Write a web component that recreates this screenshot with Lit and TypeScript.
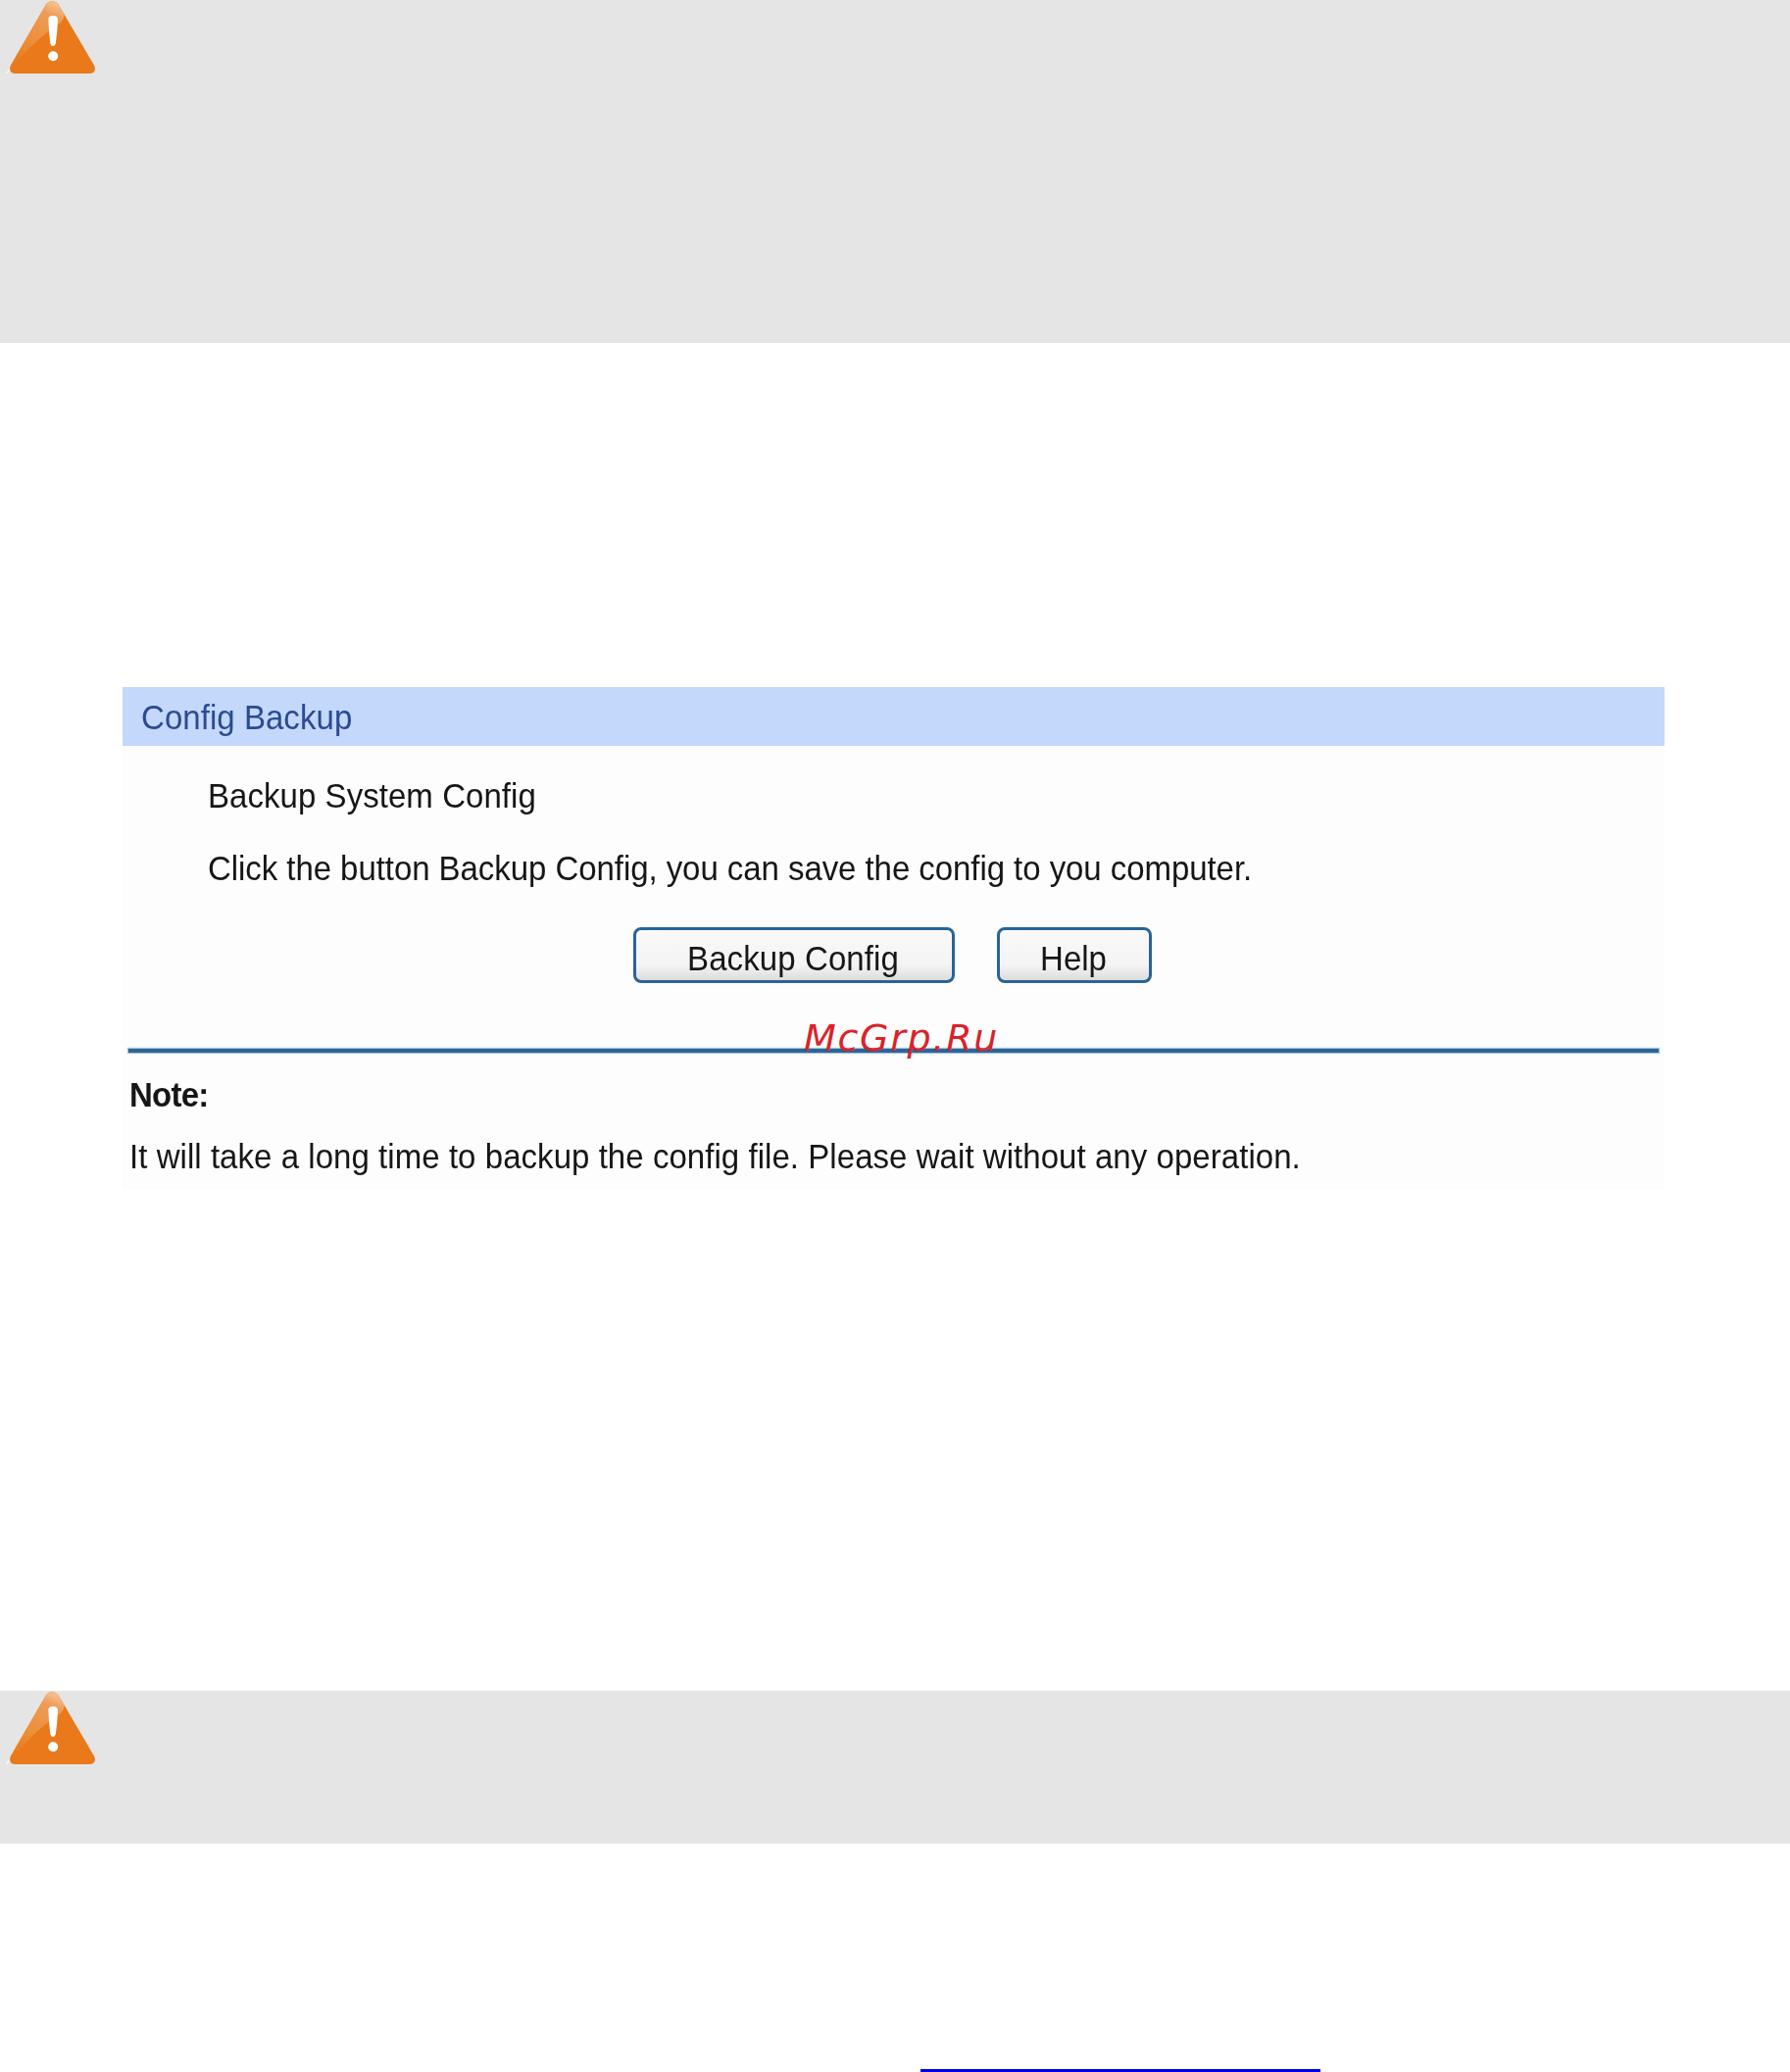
import { LitElement, html, css, svg } from "lit";
import { customElement } from "lit/decorators.js";

const warningIcon = (id: string) => svg`
  <svg class="warn" width="110" height="80" viewBox="0 0 110 80">
    <defs>
      <linearGradient id="${id}" x1="54" y1="0" x2="28" y2="62" gradientUnits="userSpaceOnUse">
        <stop offset="0" stop-color="#f7c698"/>
        <stop offset="0.22" stop-color="#ee9c58"/>
        <stop offset="0.7" stop-color="#ec8f3a"/>
        <stop offset="1" stop-color="#e9801f"/>
      </linearGradient>
    </defs>
    <path d="M6.5 75 L10.5 70" stroke="#ffffff" stroke-width="1.2" fill="none"/>
    <path d="M47.5 3.5 Q53 -1.5 59 3.5 L96.2 67 Q99 74.5 91 75 L16 75 Q8 74.5 10.8 67 Z" fill="#e9791a"/>
    <path d="M47.5 3.5 Q53 -1.5 59 3.5 L65.5 14.5 Q66 19 62 23 Q40 37 17 63 L10.8 67 Z" fill="url(#${id})"/>
    <path d="M49.3 20 Q49.3 16 54 16 Q59 16 59 20 Q58.5 33 56.8 44.5 Q56 47 54 47 Q52 47 51.4 44.5 Q49.8 33 49.3 20 Z" fill="#ffffff"/>
    <ellipse cx="54.2" cy="57.2" rx="5" ry="5" fill="#ffffff"/>
  </svg>
`;

@customElement("app-root")
export class AppRoot extends LitElement {
  static styles = css`
    :host {
      display: block;
      width: 1826px;
      height: 2114px;
      overflow: hidden;
      background: #ffffff;
      font-family: "Liberation Sans", Arial, sans-serif;
      color: #161616;
    }
    .page {
      position: relative;
      display: flex;
      flex-direction: column;
      height: 2114px;
    }
    .banner {
      background: #e5e5e5;
      flex: none;
    }
    .banner.top {
      height: 350px;
    }
    .banner.bottom {
      height: 156px;
      margin-top: 511px;
    }
    .warn {
      display: block;
    }
    .panel {
      flex: none;
      margin: 351px 0 0 125px;
      width: 1573px;
      height: 513px;
      background: #fdfdfd;
      display: flex;
      flex-direction: column;
    }
    .head {
      flex: none;
      height: 60px;
      background: #c3d8fb;
      padding-left: 19px;
      font-size: 33px;
      line-height: 62px;
      color: #2c4a93;
    }
    .head span {
      display: inline-block;
      transform: scaleY(1.08);
      filter: blur(0.5px);
      letter-spacing: 0.05px;
    }
    .line {
      font-size: 33px;
      white-space: nowrap;
      transform: scaleY(1.07);
      filter: blur(0.5px);
    }
    .indent {
      padding-left: 87px;
    }
    .l1 {
      margin-top: 31px;
      line-height: 40px;
      letter-spacing: 0.05px;
    }
    .l2 {
      margin-top: 34px;
      line-height: 40px;
      letter-spacing: -0.06px;
    }
    .buttons {
      flex: none;
      display: flex;
      gap: 43px;
      margin: 40px 0 0 521px;
    }
    .btn {
      box-sizing: border-box;
      height: 57px;
      border: 3px solid #2a6496;
      border-radius: 8px;
      background: linear-gradient(#f9f9f9 0%, #f4f4f4 70%, #dcdcdc 100%);
      color: #161616;
      filter: blur(0.5px);
      display: flex;
      justify-content: center;
    }
    .btn span {
      display: block;
      font-size: 33px;
      line-height: 58px;
      transform: scaleY(1.07);
    }
    .btn.b1 {
      width: 328px;
    }
    .btn.b1 span {
      letter-spacing: 0.1px;
      margin-right: 2px;
    }
    .btn.b2 {
      width: 158px;
    }
    .btn.b2 span {
      margin-right: 2px;
    }
    .rule {
      flex: none;
      margin: 67px 6px 0 6px;
      height: 4px;
      background: #2a6698;
      box-shadow: 0 0 1px 1px #a9c3d9;
    }
    .note {
      margin: 23px 0 0 7px;
      font-weight: 700;
      line-height: 40px;
      letter-spacing: -0.75px;
    }
    .desc {
      margin: 23px 0 0 7px;
      line-height: 40px;
      letter-spacing: 0.05px;
    }
    .link {
      flex: none;
      margin: 230px 0 0 939px;
      width: 408px;
      height: 3px;
      background: #0000ee;
    }
    .mark {
      position: absolute;
      left: 820px;
      top: 1035px;
      font-family: "DejaVu Sans", sans-serif;
      font-style: oblique;
      font-size: 38px;
      line-height: 48px;
      letter-spacing: 1.7px;
      color: #d9232a;
      white-space: nowrap;
    }
  `;

  render() {
    return html`
      <div class="page">
        <div class="banner top">${warningIcon("g1")}</div>
        <div class="panel">
          <div class="head"><span>Config Backup</span></div>
          <div class="line indent l1">Backup System Config</div>
          <div class="line indent l2">Click the button Backup Config, you can save the config to you computer.</div>
          <div class="buttons">
            <div class="btn b1"><span>Backup Config</span></div>
            <div class="btn b2"><span>Help</span></div>
          </div>
          <div class="rule"></div>
          <div class="line note">Note:</div>
          <div class="line desc">It will take a long time to backup the config file. Please wait without any operation.</div>
        </div>
        <div class="banner bottom">${warningIcon("g2")}</div>
        <div class="link"></div>
        <div class="mark">McGrp.Ru</div>
      </div>
    `;
  }
}
